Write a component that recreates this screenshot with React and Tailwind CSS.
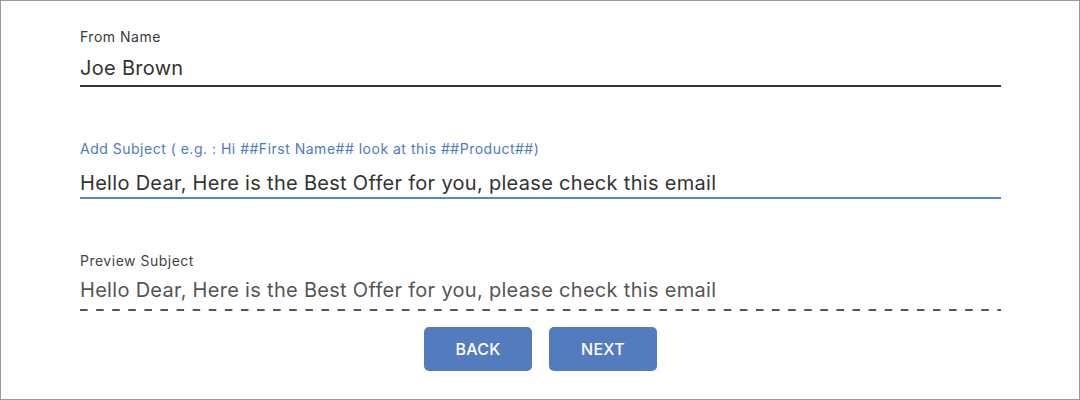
import React from "react";

const Field = ({ label, value, labelClass, valueClass, valueGap, line, className = "" }) => (
  <div className={`flex flex-col ${className}`}>
    <div className={`text-[14px] leading-[20px] tracking-[0.5px] ${labelClass}`}>{label}</div>
    <div className={`text-[20px] leading-[28px] tracking-[0.3px] ${valueGap} ${valueClass}`}>
      {value}
    </div>
    {line}
  </div>
);

export default function App() {
  const subject = "Hello Dear, Here is the Best Offer for you, please check this email";
  return (
    <div className="h-[400px] w-[1080px] border border-[#9b9b9b] bg-white pl-[79px] pr-[78px] pt-[26px] font-['Inter',sans-serif]">
      <Field
        label="From Name"
        value="Joe Brown"
        labelClass="text-[#3a3a3a]"
        valueClass="text-[#333333]"
        valueGap="mt-[7px] pb-[3px]"
        line={<div className="h-[2px] w-full bg-[#333333]" />}
      />
      <Field
        className="mt-[52px]"
        label="Add Subject ( e.g. : Hi ##First Name## look at this ##Product##)"
        value={subject}
        labelClass="text-[#4a7bc9]"
        valueClass="text-[#333333]"
        valueGap="mt-[10px] pb-0"
        line={<div className="h-[2px] w-full bg-[#5585cf]" />}
      />
      <Field
        className="mt-[52px]"
        label="Preview Subject"
        value={subject}
        labelClass="text-[#444444]"
        valueClass="text-[#555555]"
        valueGap="mt-[5px] pb-[5px]"
        line={
          <div className="h-[2px] w-full bg-[linear-gradient(to_right,#555555_50%,transparent_50%)] bg-[length:16.1px_2px] bg-repeat-x" />
        }
      />
      <div className="mt-4 flex justify-center gap-[17px]">
        <button className="h-[44px] w-[108px] rounded-[5px] bg-[#537cbf] text-[16px] font-medium tracking-[0.3px] text-white">
          BACK
        </button>
        <button className="h-[44px] w-[108px] rounded-[5px] bg-[#537cbf] text-[16px] font-medium tracking-[0.3px] text-white">
          NEXT
        </button>
      </div>
    </div>
  );
}
